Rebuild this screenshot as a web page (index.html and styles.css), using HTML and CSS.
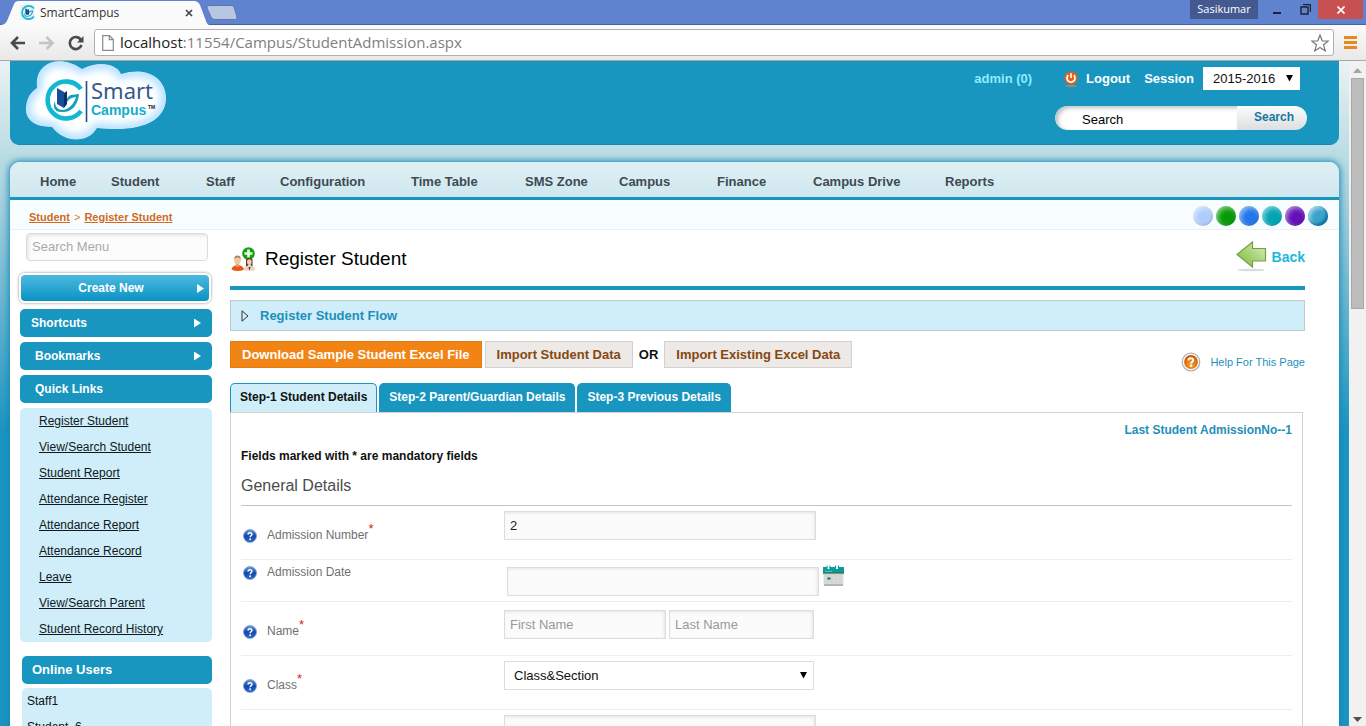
FILE: index.html
```html
<!DOCTYPE html>
<html lang="en">
<head>
<meta charset="utf-8">
<title>SmartCampus</title>
<link rel="stylesheet" href="styles.css">
</head>
<body>
<svg class="defs" aria-hidden="true">
  <defs>
    <linearGradient id="blueBall" x1="0" y1="0" x2="0" y2="1"><stop offset="0" stop-color="#6f9bdc"/><stop offset=".5" stop-color="#1247a8"/><stop offset="1" stop-color="#2a6fd0"/></linearGradient>
    <radialGradient id="orangeBall" cx=".5" cy=".7" r=".7"><stop offset="0" stop-color="#ffa52e"/><stop offset="1" stop-color="#c75200"/></radialGradient>
    <linearGradient id="arrowGreen" x1="0" y1="1" x2="1" y2="0"><stop offset="0" stop-color="#7db843"/><stop offset=".5" stop-color="#a8d477"/><stop offset="1" stop-color="#dcefc4"/></linearGradient>
    <symbol id="help" viewBox="0 0 14 14">
      <circle cx="7" cy="7" r="6.5" fill="url(#blueBall)" stroke="#7f9fd0" stroke-width=".8"/>
      <path d="M5.1 5.6C5.1 3.2 9 3.3 8.9 5.5C8.8 6.8 7.1 6.8 7.1 8.3" fill="none" stroke="#fff" stroke-width="1.5"/>
      <circle cx="7.1" cy="10.3" r=".95" fill="#fff"/>
    </symbol>
    <symbol id="mark" viewBox="0 0 40 42">
      <path d="M38 10A18.500 18.500 0 1 0 38 32" fill="none" stroke="#12b7d2" stroke-width="4.6"/>
      <path d="M20 33C29 33 35 26 36 15L28 16C25 17 23 20 23 24C26 20 29 18 33 18C31 25 26 30 20 31C15 31 12 28 12 22C9 28 12 34 20 33Z" fill="#17a0bb"/>
      <path d="M14 9L21 13V29L14 25Z" fill="#164f94"/>
      <path d="M21 14L24 12V25L21 29Z" fill="#0b2e63"/>
    </symbol>
  </defs>
</svg>

<div class="window">
  <div class="titlebar">
    <div class="tab">
      <svg class="favicon" viewBox="0 0 40 42"><rect width="40" height="42" fill="#dff0f8"/><use href="#mark"/></svg>
      <span class="tab-title">SmartCampus</span>
      <button class="tab-close" aria-label="Close tab"><svg width="8" height="8" viewBox="0 0 8 8"><path d="M1 1L7 7M7 1L1 7" stroke="#444" stroke-width="1.7"/></svg></button>
    </div>
    <button class="new-tab" aria-label="New tab"><svg width="32" height="15" viewBox="0 0 32 15"><path d="M3 .5H25Q27 .5 28 2L31 12Q31.500 14.500 29 14.500H9Q6 14.500 5 12L1 3Q.5.5 3 .5Z" fill="#b8c6e2" stroke="#5a76b4"/></svg></button>
    <div class="window-controls">
      <span class="profile">Sasikumar</span>
      <button class="win-btn" aria-label="Minimize"><svg width="9" height="10" viewBox="0 0 9 10"><path d="M0 8H8" stroke="#1c2336" stroke-width="2"/></svg></button>
      <button class="win-btn" aria-label="Restore"><svg width="11" height="11" viewBox="0 0 11 11"><path d="M1 3H8V10H1ZM3 .5H10.500V8" fill="none" stroke="#1c2336" stroke-width="1.4"/></svg></button>
      <button class="win-btn win-close" aria-label="Close"><svg width="8" height="8" viewBox="0 0 8 8"><path d="M.5.5L7.500 7.500M7.500.5L.5 7.500" stroke="#fff" stroke-width="1.7"/></svg></button>
    </div>
  </div>

  <div class="toolbar">
    <button class="tool" aria-label="Back"><svg width="16" height="14" viewBox="0 0 16 14"><path d="M15 7H2M8 1L2 7L8 13" fill="none" stroke="#4a4a4a" stroke-width="2.6"/></svg></button>
    <button class="tool" aria-label="Forward"><svg width="16" height="14" viewBox="0 0 16 14"><path d="M0 7H13M7.500 1L13.500 7L7.500 13" fill="none" stroke="#c4c4c4" stroke-width="2.600"/></svg></button>
    <button class="tool" aria-label="Reload"><svg width="16" height="16" viewBox="0 0 16 16"><path d="M13 5A6 6 0 1 0 13.500 10" fill="none" stroke="#4a4a4a" stroke-width="2.600"/><path d="M15.500 1V7.500H9Z" fill="#4a4a4a"/></svg></button>
    <label class="address">
      <svg width="12" height="16" viewBox="0 0 12 16"><path d="M.7.7H7.500L11.300 4.500V15.300H.7ZM7.300.7V4.700H11.300" fill="#fff" stroke="#8a8a8a" stroke-width="1.200"/></svg>
      <span class="url"><b class="host">localhost</b>:11554/Campus/StudentAdmission.aspx</span>
      <svg class="star" width="18" height="18" viewBox="0 0 18 18"><path d="M9 1L11.200 6.800L17.300 7L12.500 10.800L14.300 16.900L9 13.500L3.700 16.900L5.500 10.800L.7 7L6.800 6.800Z" fill="#fff" stroke="#777" stroke-width="1.200"/></svg>
    </label>
    <button class="menu" aria-label="Menu"><svg width="13" height="13" viewBox="0 0 13 13"><path d="M0 1.500H13M0 6.500H13M0 11.500H13" stroke="#e58a1c" stroke-width="3"/></svg></button>
  </div>

  <div class="viewport">
    <div class="page">
      <header class="header">
        <svg class="logo" width="144" height="82" viewBox="0 0 144 82" role="img" aria-label="Smart Campus">
          <defs>
            <clipPath id="cloudClip"><path id="cloud" d="M12 27C9 0 36-7 57 8C74-1 92 3 96 13C122 5 141 17 141 37C141 60 116 72 72 67C62 84 38 81 27 66C6 66 0 56 1 46C2 36 6 31 12 27Z"/></clipPath>
            <filter id="soft" x="-20%" y="-20%" width="140%" height="140%"><feGaussianBlur stdDeviation="4"/></filter>
          </defs>
          <g clip-path="url(#cloudClip)">
            <use href="#cloud" fill="#fff"/>
            <use href="#cloud" fill="none" stroke="#a9dbff" stroke-width="9" filter="url(#soft)"/>
          </g>
          <use href="#mark" x="18" y="18" width="40" height="42"/>
          <path d="M61.500 20V61" stroke="#1c4f8c" stroke-width="1.600"/>
          <text class="logo-smart" x="66" y="38">Smart</text>
          <text class="logo-campus" x="66" y="54">Campus</text>
          <text class="logo-tm" x="123" y="48">TM</text>
        </svg>
        <div class="account">
          <div class="account-row">
            <a class="admin" href="#">admin (0)</a>
            <a class="logout" href="#">
              <svg width="14" height="16" viewBox="0 0 14 16"><ellipse cx="7" cy="15" rx="6" ry=".8" fill="#c98d5e"/><circle cx="7" cy="7" r="6.600" fill="#e2611c"/><path d="M4.300 4.200A4 4 0 1 0 9.700 4.200M7 2.300V7" fill="none" stroke="#fff" stroke-width="1.700"/></svg>
              Logout</a>
            <label class="session" for="session">Session</label>
            <select class="select year" id="session"><option>2015-2016</option></select>
          </div>
          <form class="search">
            <input class="search-text" type="text" value="Search" aria-label="Search">
            <button class="search-btn" type="button">Search</button>
          </form>
        </div>
      </header>

      <div class="card">
        <nav class="nav">
          <a href="#">Home</a><a href="#">Student</a><a href="#">Staff</a><a href="#">Configuration</a><a href="#">Time Table</a><a href="#">SMS Zone</a><a href="#">Campus</a><a href="#">Finance</a><a href="#">Campus Drive</a><a href="#">Reports</a>
        </nav>
        <div class="crumb-bar">
          <div class="crumbs"><a href="#">Student</a><span>&gt;</span><a href="#">Register Student</a></div>
          <div class="themes">
            <button class="ball light" aria-label="Light theme"></button>
            <button class="ball green" aria-label="Green theme"></button>
            <button class="ball blue" aria-label="Blue theme"></button>
            <button class="ball teal" aria-label="Teal theme"></button>
            <button class="ball purple" aria-label="Purple theme"></button>
            <button class="ball sky" aria-label="Sky theme"></button>
          </div>
        </div>

        <div class="columns">
          <aside class="side">
            <input class="side-search" type="text" placeholder="Search Menu" aria-label="Search Menu">
            <button class="create">Create New<span class="caret"></span></button>
            <button class="side-head near">Shortcuts<span class="caret"></span></button>
            <button class="side-head">Bookmarks<span class="caret"></span></button>
            <h2 class="side-head">Quick Links</h2>
            <ul class="links">
              <li><a href="#">Register Student</a></li>
              <li><a href="#">View/Search Student</a></li>
              <li><a href="#">Student Report</a></li>
              <li><a href="#">Attendance Register</a></li>
              <li><a href="#">Attendance Report</a></li>
              <li><a href="#">Attendance Record</a></li>
              <li><a href="#">Leave</a></li>
              <li><a href="#">View/Search Parent</a></li>
              <li><a href="#">Student Record History</a></li>
            </ul>
            <section class="online">
              <h2 class="side-head near">Online Users</h2>
              <ul class="users"><li>Staff1</li><li>Student_6</li></ul>
            </section>
          </aside>

          <main class="main">
            <div class="title-row">
              <svg class="title-icon" width="26" height="25" viewBox="0 0 26 25">
                <circle cx="18.500" cy="6.500" r="6.300" fill="#12a012"/><path d="M18.500 2.500V10.500M14.500 6.500H22.500" stroke="#e9ffe0" stroke-width="2.600"/>
                <path d="M14 23.500Q14 18 18.500 18Q25 18 25 23.500Z" fill="#edd2c2"/><path d="M16 19V12.500Q19.500 9 22.500 12.500V19Q21 20 21 17.500H18Q18 20 16 19Z" fill="#5d3a28"/><ellipse cx="19.300" cy="15" rx="2.300" ry="2.800" fill="#f2cdb4"/><path d="M18.500 20L19.500 24L20.500 20Z" fill="#5d3527"/>
                <path d="M1.500 22.500Q2 18.500 7.500 18Q13.500 18.500 14 22.500Q8 25.500 1.500 22.500Z" fill="#ea5a12"/><path d="M6 15H9V19.500Q7.500 20.500 6 19.500Z" fill="#d9a07a"/><ellipse cx="7.500" cy="13.300" rx="3.300" ry="3.900" fill="#efc7a5"/><path d="M4.200 12.500Q4 8.500 7.500 8.500Q11 8.500 10.800 12.500Q9.500 10.300 7.500 10.500Q5 10.300 4.200 12.500Z" fill="#a88067"/>
              </svg>
              <h1>Register Student</h1>
              <a class="back" href="#">
                <svg width="32" height="31" viewBox="0 0 32 31"><ellipse cx="15" cy="29" rx="14" ry="1.300" fill="#d9dde0"/><path d="M1 13.500L16.500 1V7.500H29.500V20H16.500V26Z" fill="url(#arrowGreen)" stroke="#74a043" stroke-width="1.200"/></svg>
                Back</a>
            </div>
            <button class="flow"><svg width="8" height="12" viewBox="0 0 8 12"><path d="M1 .8V11.200L7 6Z" fill="none" stroke="#333" stroke-width="1"/></svg>Register Student Flow</button>
            <div class="actions">
              <button class="btn primary">Download Sample Student Excel File</button>
              <button class="btn">Import Student Data</button>
              <span class="or">OR</span>
              <button class="btn">Import Existing Excel Data</button>
              <a class="help-page" href="#">
                <svg width="20" height="20" viewBox="0 0 20 20"><circle cx="10" cy="10" r="8.800" fill="#fff" stroke="#b5b0ac" stroke-width="1.200"/><circle cx="10" cy="10" r="6.900" fill="url(#orangeBall)"/><path d="M7.500 8.400C7.500 5.500 12.400 5.600 12.300 8.300C12.200 9.900 10.100 9.800 10.100 11.500" fill="none" stroke="#fff" stroke-width="1.900"/><circle cx="10.100" cy="13.800" r="1.200" fill="#fff"/></svg>
                Help For This Page</a>
            </div>
            <div class="tabs">
              <button class="step current">Step-1 Student Details</button>
              <button class="step">Step-2 Parent/Guardian Details</button>
              <button class="step">Step-3 Previous Details</button>
            </div>
            <form class="panel">
              <p class="last">Last Student AdmissionNo--1</p>
              <p class="note">Fields marked with * are mandatory fields</p>
              <h2 class="section">General Details</h2>
              <div class="row tall">
                <svg class="q"><use href="#help"/></svg>
                <label for="number">Admission Number<sup>*</sup></label>
                <div class="field"><input class="box wide" id="number" type="text" value="2"></div>
              </div>
              <div class="row">
                <svg class="q"><use href="#help"/></svg>
                <label for="date">Admission Date</label>
                <div class="field date"><input class="box wide" id="date" type="text">
                  <button class="calendar" type="button" aria-label="Pick a date"><svg width="21" height="21" viewBox="0 0 21 21"><rect x=".5" y="8" width="20" height="12.500" rx="1" fill="#dcdddb"/><path d="M1 20H20" stroke="#a3a3a3" stroke-width="1.500"/><path d="M1 11H20M1 14H20M1 17H20M5 8V20M9 8V20M13 8V20M17 8V20" stroke="#cbcdcb" stroke-width=".6"/><path d="M0 2H4.500V4H6.500V2H13V4H15V2H21V8.500H0Z" fill="#0b9c98"/><path d="M4 .5V3M7 .5V3M12.500 .5V3M15.500 .5V3" stroke="#0b9c98"/><path d="M0 8H21" stroke="#08726f"/><path d="M0 9.300H21" stroke="#eec8ad"/><rect x="4.500" y="12.500" width="3" height="2" fill="#1b6a55"/><path d="M2 6.300H9" stroke="#6ed2cf" stroke-width=".8"/></svg></button>
                </div>
              </div>
              <div class="row tall">
                <svg class="q"><use href="#help"/></svg>
                <label for="first">Name<sup>*</sup></label>
                <div class="field names"><input class="box first" id="first" type="text" placeholder="First Name"><input class="box lastname" type="text" placeholder="Last Name" aria-label="Last Name"></div>
              </div>
              <div class="row tall">
                <svg class="q"><use href="#help"/></svg>
                <label for="class">Class<sup>*</sup></label>
                <div class="field"><select class="select class" id="class"><option>Class&amp;Section</option></select></div>
              </div>
              <div class="row tall">
                <span></span><span></span>
                <div class="field"><input class="box wide" type="text" aria-label="Roll number"></div>
              </div>
            </form>
          </main>
        </div>
      </div>
    </div>
    <div class="scrollbar" aria-hidden="true">
      <svg width="9" height="5" viewBox="0 0 9 5"><path d="M0 5L4.500 0L9 5Z" fill="#a3a3a3"/></svg>
      <div class="thumb"></div>
      <svg class="down" width="9" height="5" viewBox="0 0 9 5"><path d="M0 0L4.500 5L9 0Z" fill="#505050"/></svg>
    </div>
  </div>
</div>
</body>
</html>
```

FILE: styles.css
```css
* { box-sizing: border-box; }
body { margin: 0; font-family: "Liberation Sans", Arial, sans-serif; font-size: 12px; color: #111; }
button, input, select { font-family: inherit; font-size: inherit; margin: 0; }
button { border: 0; padding: 0; background: none; cursor: pointer; }
h1, h2, p, ul { margin: 0; padding: 0; }
ul { list-style: none; }
svg { display: block; flex: none; }
.defs { position: absolute; width: 0; height: 0; }

.window { display: flex; flex-direction: column; height: 100vh; overflow: hidden; }

/* Browser title bar */
.titlebar { display: flex; height: 25px; flex: none; background: #5f83cf; border-bottom: 1px solid #44659f; font-family: "Open Sans", "Noto Sans", sans-serif; }
.tab { display: flex; align-items: center; width: 210px; height: 25px; flex: none; padding: 0 17px 0 20px; background: #fbfbfb; clip-path: path("M0 25Q5 25 7 21L14 4Q15 1 19 1H194Q198 1 200 5L206 21Q207 25 210 25Z"); }
.favicon { width: 15px; height: 15px; }
.tab-title { flex: 1; padding-left: 5px; font-size: 12px; color: #333; }
.new-tab { align-self: flex-start; margin: 5px 0 0 -4px; }
.window-controls { display: flex; margin-left: auto; padding-right: 3px; height: 19px; }
.profile { width: 68px; background: #43598f; color: #fff; font-size: 11px; line-height: 18px; text-align: center; }
.win-btn { display: grid; place-items: center; width: 30px; }
.profile + .win-btn { margin-left: 4px; }
.win-btn + .win-btn { width: 26px; }
.win-btn.win-close { width: 45px; background: #c75050; }

/* Browser toolbar */
.toolbar { display: flex; align-items: center; gap: 13px; height: 36px; flex: none; padding: 0 9px 0 10px; background: linear-gradient(#fafafa, #e9e9e9); border-bottom: 1px solid #a8a8a8; }
.address { display: flex; flex: 1; align-items: center; gap: 6px; height: 27px; margin-left: -3px; padding: 0 4px 0 7px; background: #fff; border: 1px solid #b0b0b0; border-radius: 3px; font-family: "Open Sans", "Noto Sans", sans-serif; font-size: 15px; }
.url { flex: 1; padding-bottom: 2px; color: #808080; }
.host { font-weight: 400; color: #222; }
.menu { margin-left: -3px; }

/* Page frame */
.viewport { display: flex; flex: 1; min-height: 0; }
.page { flex: 1; min-width: 0; padding: 0 10px; overflow: hidden; background: linear-gradient(#eaf2f3, #bcdde4 90px, #a8d0dd 140px, #1b95c0 370px); }
.header { display: flex; justify-content: space-between; height: 84px; padding-left: 15px; background: #1896c0; border-bottom: 1px solid #1688ae; border-radius: 0 0 9px 9px; }
.logo-smart { font-family: "Noto Sans", sans-serif; font-size: 22px; fill: #345a8c; }
.logo-campus { font-size: 14px; font-weight: 700; fill: #12aecb; }
.logo-tm { font-size: 5px; font-weight: 700; fill: #222; }
.account { padding-top: 6px; font-weight: 700; font-size: 13px; }
.account-row { display: flex; align-items: center; height: 23px; padding-right: 39px; color: #fff; }
.account-row a { color: inherit; text-decoration: none; }
.account-row .admin { color: #8decff; margin-right: 32px; }
.logout { display: flex; align-items: center; gap: 8px; margin-right: 14px; }
.session { margin-right: 9px; }
.select { appearance: none; border: 1px solid #ddd; border-radius: 0; padding: 0 9px; font-size: 13px; color: #111; background: #fff url("data:image/svg+xml,%3Csvg xmlns='http://www.w3.org/2000/svg' width='7' height='7'%3E%3Cpath d='M0 0H7L3.500 6.500Z'/%3E%3C/svg%3E") no-repeat right 6px center; }
.year { width: 97px; height: 23px; border-color: #fff; }
.search { display: flex; width: 252px; height: 24px; margin: 16px 32px 0 auto; border-radius: 12px; overflow: hidden; }
.search-text { flex: 1; min-width: 0; border: 0; padding: 2px 0 0 27px; font-size: 13px; background: #fff; box-shadow: inset 3px 2px 4px #b9c2c6; border-radius: 12px 0 0 12px; }
.search-btn { width: 70px; padding: 0 0 2px 4px; font-weight: 700; font-size: 12px; color: #1878a0; background: linear-gradient(#fafbfb, #dcdfe1); }

.card { min-height: 700px; margin-top: 17px; background: #fff; border-radius: 10px 10px 0 0; box-shadow: 0 0 7px 1px #0f86b6; }
.nav { display: grid; grid-template-columns: 71px 95px 74px 131px 114px 94px 98px 96px 132px 1fr; align-items: center; height: 38px; padding-left: 30px; border-bottom: 3px solid #1896c0; border-radius: 10px 10px 0 0; background: linear-gradient(#e0f0f4, #cfe7ef); }
.nav a { padding-top: 4px; font-size: 13px; font-weight: 700; color: #3e4a52; text-decoration: none; }
.crumb-bar { display: flex; align-items: center; justify-content: space-between; height: 30px; padding: 3px 11px 0 19px; background: #f8feff; border-bottom: 1px solid #e9f1f4; }
.crumbs { display: flex; gap: 4px; padding-top: 2px; font-size: 11px; color: #d87a28; }
.crumbs a { font-weight: 700; color: #d2691e; }
.themes { display: flex; gap: 3px; }
.ball { width: 20px; height: 20px; border-radius: 50%; box-shadow: inset -1px -1px 2px #0002, inset 2px 2px 5px #fff8; }
.light { background: #b0ccfb; }
.green { background: #079a07; }
.blue { background: #2277ec; }
.teal { background: #03a4b4; }
.purple { background: #6410b8; }
.sky { background: #3aa3cb; box-shadow: inset -2px -2px 3px #0d6f9c, inset 2px 2px 4px #a8dcee; }

/* Sidebar */
.columns { display: flex; }
.side { width: 220px; flex: none; padding: 3px 18px 0 10px; }
.side-search { display: block; width: 182px; height: 28px; margin-left: 6px; padding: 0 5px; border: 1px solid #dcdcdc; border-radius: 4px; background: #fcfcfc; box-shadow: inset 2px 2px 3px #e8e8e8; }
.side-search::placeholder { color: #aaa; font-size: 13px; opacity: 1; }
.create { display: flex; align-items: center; justify-content: center; position: relative; width: 192px; height: 30px; margin: 12px 0 6px -1px; border: 2px solid #fff; border-radius: 6px; background: linear-gradient(#4cbae0, #0a93c4); box-shadow: 0 0 3px #888; color: #fff; font-size: 12px; font-weight: 700; padding: 0 8px 1px 0; }
.caret { width: 7px; height: 9px; background: #fff; clip-path: polygon(0 0, 100% 50%, 0 100%); }
.create .caret { position: absolute; right: 5px; top: 9px; }
.side-head { display: flex; align-items: center; justify-content: space-between; width: 100%; height: 28px; margin-bottom: 5px; padding: 0 11px 0 15px; border-radius: 5px; background: #1896c0; color: #fff; font-size: 12px; font-weight: 700; }
.side-head.near { padding-left: 11px; }
.links { padding: 0 0 0 19px; border-radius: 5px; background: #cfeef9; line-height: 26px; font-size: 12px; }
.links a { color: #101820; }
.online { padding: 14px 0 0 2px; }
.online .side-head { margin-bottom: 4px; padding: 0 10px 1px; font-size: 13px; }
.users { padding: 0 5px; border-radius: 5px; background: #cfeef9; line-height: 26px; }

/* Main column */
.main { flex: 1; min-width: 0; padding-right: 34px; }
.title-row { display: flex; align-items: center; gap: 9px; height: 60px; padding: 4px 0 2px; border-bottom: 4px solid #1896c0; }
.title-row h1 { font-size: 19px; font-weight: 400; color: #000; }
.back { display: flex; align-items: center; gap: 4px; margin: -5px 0 0 auto; font-size: 14px; font-weight: 700; color: #1bb8dc; text-decoration: none; }
.flow { display: flex; align-items: center; gap: 11px; width: 100%; height: 31px; margin-top: 10px; padding: 0 10px; border: 1px solid #c0cace; background: #cfeef9; font-size: 13px; font-weight: 700; color: #1f8fb9; }
.actions { display: flex; align-items: center; margin-top: 10px; height: 27px; }
.btn { height: 27px; padding: 0 11px; margin-right: 3px; border: 1px solid #d4d0cd; background: #ece9e6; color: #85480f; font-size: 13px; font-weight: 700; white-space: nowrap; }
.btn.primary { border-color: #e27c10; background: #f28416; color: #fff; }
.or { margin: 0 6px 0 3px; font-size: 13px; font-weight: 700; }
.help-page { display: flex; align-items: center; gap: 9px; margin: 15px 0 0 auto; font-size: 11px; color: #1f8fb9; text-decoration: none; }
.tabs { display: flex; gap: 2px; margin-top: 15px; height: 29px; }
.step { height: 29px; padding: 0 9px 2px; border: 1px solid #1896c0; border-bottom: 0; border-radius: 5px 5px 0 0; background: #1896c0; color: #fff; font-size: 12px; font-weight: 700; white-space: nowrap; }
.step.current { background: #cfeef9; color: #111; }
.panel { margin-right: 2px; padding: 9px 10px 0; border: 1px solid #d3d3d3; }
.last { text-align: right; line-height: 16px; font-weight: 700; color: #1f8fb9; }
.note { margin-top: 10px; line-height: 16px; font-weight: 700; }
.section { height: 42px; padding-top: 12px; border-bottom: 1px solid #c4c4c4; line-height: 20px; font-size: 16px; font-weight: 400; color: #4c4c4c; }
.row { display: grid; grid-template-columns: 26px 237px 1fr; height: 42px; padding: 4px 0 0; border-bottom: 1px solid #ececec; line-height: 16px; color: #707070; }
.row.tall { height: 54px; padding-top: 21px; }
.q { width: 14px; height: 14px; margin: 2px 0 0 2px; }
.row sup { font-size: 13px; color: #e02020; line-height: 0; vertical-align: 6px; }
.field { display: flex; gap: 3px; align-items: flex-start; margin-top: -16px; }
.field.date { margin: 3px 0 0 3px; }
.field.names { margin-top: -13px; }
.box { height: 29px; padding: 0 5px; border: 1px solid #ddd; background: #fbfbfb; box-shadow: inset -1px 1px 3px #e4e4e4; font-size: 13px; color: #222; min-width: 0; }
.box::placeholder { color: #999; opacity: 1; }
.wide { width: 312px; }
.first { width: 162px; }
.lastname { width: 145px; }
.class { width: 310px; height: 29px; }
.calendar { margin: -2px 0 0 1px; }

/* Page scrollbar */
.scrollbar { display: flex; flex-direction: column; align-items: center; width: 17px; flex: none; padding: 7px 0 4px; background: #f1f1f1; }
.thumb { width: 13px; height: 231px; margin-top: 5px; background: #bcbcbc; border: 1px solid #a8a8a8; }
.down { margin-top: auto; }
```
